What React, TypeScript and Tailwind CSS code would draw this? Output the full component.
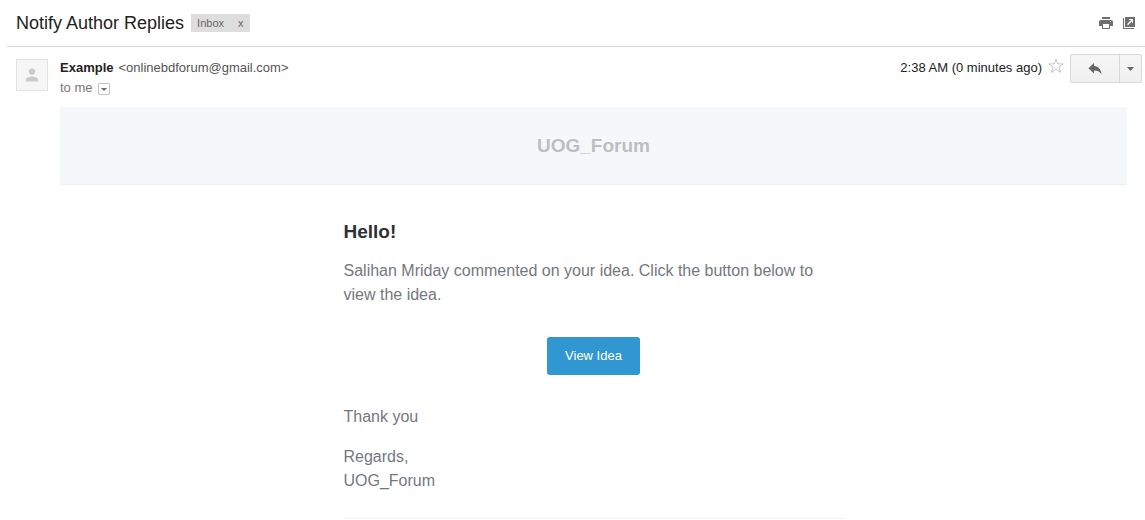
function PrintIcon() {
  return (
    <svg viewBox="0 0 14 12" className="h-3 w-3.5" fill="#6f6f6f" aria-hidden="true">
      <path d="M3 0h8v2H3z" />
      <path
        fillRule="evenodd"
        d="M2 3h10a2 2 0 0 1 2 2v4h-3v3H3V9H0V5a2 2 0 0 1 2-2zm2 4v4h6V7zm7-3v1h1V4z"
      />
    </svg>
  );
}

function NewWindowIcon() {
  return (
    <svg viewBox="0 0 12 12" className="size-3" aria-hidden="true">
      <path d="M0 1h1v10h10v1H0z" fill="#6f6f6f" />
      <path d="M2 0h10v10H2z" fill="#6f6f6f" />
      <path d="M6 2h4v4H9V4.200L5 8.200 4 7.200 8 3H6z" fill="#fff" />
    </svg>
  );
}

function PersonIcon() {
  return (
    <svg viewBox="0 0 14 14" className="size-3.5" fill="#cacaca" aria-hidden="true">
      <circle cx="7" cy="3.6" r="3.1" />
      <path d="M1 13.5v-1.7C1 9.600 5 8.500 7 8.500s6 1.100 6 3.300v1.700z" />
    </svg>
  );
}

function StarIcon() {
  return (
    <svg viewBox="0 0 16 16" className="size-4" fill="#fff" stroke="#c4c4c4" aria-hidden="true">
      <path d="M8 1.200l1.800 4.700h5.400l-4.300 3.300 1.700 5.300L8 11.300l-4.600 3.200 1.700-5.300L0.800 5.900h5.400z" />
    </svg>
  );
}

function ReplyIcon() {
  return (
    <svg viewBox="0 0 14 12" className="h-3 w-3.5" fill="#666" aria-hidden="true">
      <path d="M6 0v3c4.500.500 7 3.500 7.500 8C11.500 8.500 9.500 7.500 6 7.500V10.500L0.500 5.200z" />
    </svg>
  );
}

function Caret() {
  return (
    <svg viewBox="0 0 7 4" className="h-1 w-[7px]" fill="#666" aria-hidden="true">
      <path d="M0 0h7L3.500 4z" />
    </svg>
  );
}

function SmallCaret() {
  return (
    <svg viewBox="0 0 6 3" className="h-[3px] w-1.5" fill="#666" aria-hidden="true">
      <path d="M0 0h6L3 3z" />
    </svg>
  );
}

export default function App() {
  return (
    <main className="bg-white font-['Liberation_Sans',Arial,sans-serif] text-[13px] text-[#222]">
      <header className="ml-[7px] flex h-[47px] items-center border-b border-[#d8d8d8] pr-2.5 pl-[9px]">
        <h1 className="text-lg leading-6">Notify Author Replies</h1>
        <div className="ml-[7px] flex h-[18px] items-center bg-[#ddd] text-[11px] text-[#666]">
          <span className="pl-1.5">Inbox</span>
          <button type="button" aria-label="Remove Inbox label" className="ml-2 px-1.5">
            x
          </button>
        </div>
        <div className="ml-auto flex items-center gap-2.5">
          <button type="button" aria-label="Print all">
            <PrintIcon />
          </button>
          <button type="button" aria-label="Open in new window">
            <NewWindowIcon />
          </button>
        </div>
      </header>

      <section className="flex h-[60px] items-start pr-[3px] pl-4">
        <div className="mt-3 flex size-8 items-center justify-center border border-[#e0e0e0] bg-[#f5f5f5]">
          <PersonIcon />
        </div>
        <div className="mt-[11px] ml-3 leading-5">
          <p>
            <strong>Example</strong>
            <span className="ml-[5px] text-[#555]">&lt;onlinebdforum@gmail.com&gt;</span>
          </p>
          <div className="flex items-center text-[#777]">
            to me
            <button
              type="button"
              aria-label="Show details"
              className="mt-0.5 ml-[5px] flex size-3 items-center justify-center rounded-[1px] border border-[#c4c4c4]"
            >
              <SmallCaret />
            </button>
          </div>
        </div>
        <div className="mt-[7px] ml-auto flex items-start">
          <time className="mt-1 leading-5">2:38 AM (0 minutes ago)</time>
          <button type="button" aria-label="Star" className="mx-1.5 mt-1">
            <StarIcon />
          </button>
          <div className="flex h-[29px] rounded-xs border border-[#d8d8d8] bg-linear-to-b from-[#f6f6f6] to-[#f0f0f0]">
            <button type="button" aria-label="Reply" className="flex w-12 items-center justify-center">
              <ReplyIcon />
            </button>
            <button
              type="button"
              aria-label="More"
              className="flex w-[22px] items-center justify-center border-l border-[#d8d8d8]"
            >
              <Caret />
            </button>
          </div>
        </div>
      </section>

      <article className="mr-[18px] ml-[60px] text-base leading-6 text-[#74787e]">
        <div className="border-b border-[#edeff2] bg-[#f5f8fa] py-[26px] text-center text-[19px] leading-[25px] font-bold text-[#bbbfc3]">
          UOG_Forum
        </div>
        <div className="mx-auto max-w-[500px] pt-[35px]">
          <h2 className="mb-[15px] text-[19px] leading-6 font-bold text-[#2f3133]">Hello!</h2>
          <p>Salihan Mriday commented on your idea. Click the button below to view the idea.</p>
          <div className="my-[30px] flex justify-center">
            <a
              href="#idea"
              className="rounded-[3px] bg-[#3097d1] px-[18px] py-[9px] text-[13px] leading-5 text-white"
            >
              View Idea
            </a>
          </div>
          <p>Thank you</p>
          <p className="mt-4">
            Regards,
            <br />
            UOG_Forum
          </p>
          <hr className="mt-[25px] border-[#edeff2]" />
        </div>
      </article>
    </main>
  );
}
